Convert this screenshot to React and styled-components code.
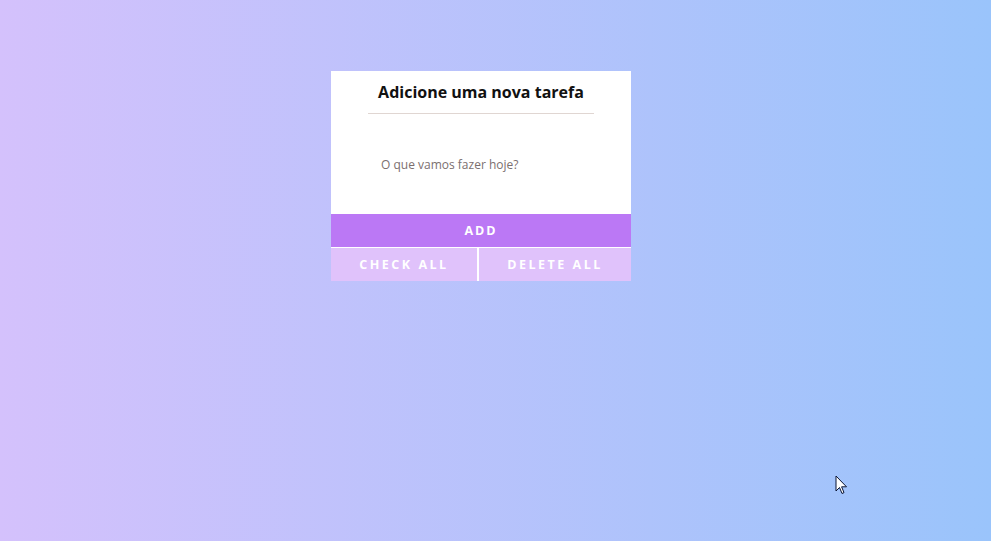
import React from 'react';
import styled, { createGlobalStyle } from 'styled-components';

const GlobalStyle = createGlobalStyle`
  html, body {
    margin: 0;
    padding: 0;
  }
  body {
    font-family: 'Open Sans', 'Liberation Sans', sans-serif;
  }
`;

const Page = styled.div`
  position: relative;
  min-height: 541px;
  box-sizing: border-box;
  padding: 71px 0 0 331px;
  background: linear-gradient(to right, #d4c1fc, #9ac4fb);
`;

const Card = styled.div`
  width: 300px;
  background: #fff;
  display: flex;
  flex-direction: column;
`;

const Header = styled.div`
  padding: 9px 37px 0;
`;

const Title = styled.h1`
  margin: 0;
  padding-bottom: 9px;
  font-size: 16px;
  font-weight: 700;
  line-height: 24px;
  color: #111;
  text-align: center;
  border-bottom: 1px solid #e0d6d2;
`;

const InputWrap = styled.div`
  height: 100px;
  display: flex;
  align-items: center;
  padding: 0 50px;
`;

const Input = styled.input`
  width: 100%;
  border: none;
  outline: none;
  font-family: 'Open Sans', sans-serif;
  font-size: 12px;
  color: #333;
  padding: 0;
  &::placeholder {
    color: #7b6f6f;
  }
`;

const Button = styled.button`
  border: none;
  margin: 0;
  cursor: pointer;
  font-family: 'Open Sans', sans-serif;
  font-weight: 700;
  font-size: 12.5px;
  color: #fff;
  letter-spacing: ${(p) => p.$spacing || '2px'};
  background: ${(p) => p.$bg};
  height: ${(p) => p.$h}px;
  padding: 0;
`;

const Row = styled.div`
  display: grid;
  grid-template-columns: 146px 152px;
  column-gap: 2px;
  margin-top: 1px;
  background: #fff;
`;

const Cursor = styled.svg`
  position: absolute;
  left: 835px;
  top: 475px;
`;

export default function App() {
  return (
    <>
      <GlobalStyle />
      <Page>
        <Card>
          <Header>
            <Title>Adicione uma nova tarefa</Title>
          </Header>
          <InputWrap>
            <Input placeholder="O que vamos fazer hoje?" />
          </InputWrap>
          <Button $bg="#bb78f5" $h={33}>ADD</Button>
          <Row>
            <Button $bg="#e0c2fb" $h={33} $spacing="2.5px">CHECK ALL</Button>
            <Button $bg="#e0c2fb" $h={33} $spacing="2.5px">DELETE ALL</Button>
          </Row>
        </Card>
        <Cursor width="14" height="22" viewBox="0 0 14 22">
          <path
            d="M1 1 L1 16 L4.5 12.5 L7 18.5 L9 17.6 L6.6 11.8 L11.5 11.8 Z"
            fill="#fff"
            stroke="#0a1433"
            strokeWidth="1"
            strokeLinejoin="round"
          />
        </Cursor>
      </Page>
    </>
  );
}
